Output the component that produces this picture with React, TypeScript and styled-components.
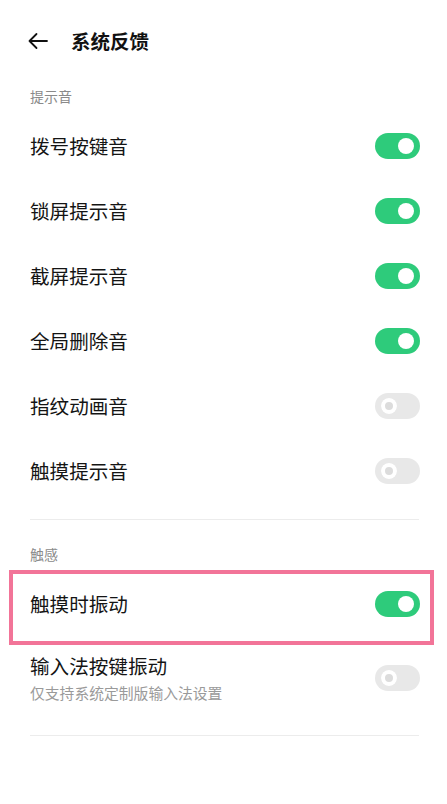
import React from "react";
import styled, { createGlobalStyle } from "styled-components";

const GlobalStyle = createGlobalStyle`
  html, body { margin: 0; padding: 0; background: #ffffff; }
  body {
    font-family: "Noto Sans CJK SC", "Noto Sans", sans-serif;
    color: #141414;
    -webkit-font-smoothing: antialiased;
  }
  * { box-sizing: border-box; }
`;

const Page = styled.div`
  width: 447px;
  min-height: 804px;
  background: #fff;
  padding: 0 28px 0 30px;
  display: flex;
  flex-direction: column;
`;

const Header = styled.header`
  height: 81px;
  display: flex;
  align-items: center;
  gap: 22px;
  margin-left: -3px;
`;

const BackButton = styled.button`
  width: 22px;
  height: 22px;
  padding: 0;
  border: none;
  background: none;
  display: flex;
  align-items: center;
  justify-content: center;
  color: #111;
`;

const Title = styled.h1`
  margin: 0;
  font-size: 19.5px;
  font-weight: 700;
  line-height: 26px;
  color: #111;
`;

const SectionLabel = styled.div<{ $top: number }>`
  padding-top: ${(p) => p.$top}px;
  padding-bottom: 7px;
  font-size: 14px;
  line-height: 20px;
  color: #8a8a8a;
`;

const Row = styled.div<{ $highlight?: boolean; $tall?: boolean }>`
  position: relative;
  display: flex;
  align-items: center;
  justify-content: space-between;
  min-height: 65px;
  padding: ${(p) => (p.$tall ? "17px 0" : "0")};
  ${(p) =>
    p.$highlight &&
    `
    &::after {
      content: "";
      position: absolute;
      left: -21px;
      right: -15px;
      top: -1px;
      bottom: -9px;
      border: 4px solid #f27498;
      pointer-events: none;
    }
  `}
`;

const TextBlock = styled.div`
  display: flex;
  flex-direction: column;
`;

const RowTitle = styled.div`
  font-size: 19.6px;
  line-height: 26px;
  color: #141414;
`;

const RowSub = styled.div`
  font-size: 14.8px;
  line-height: 20px;
  color: #9a9a9a;
  margin-top: 4px;
`;

const Toggle = styled.div<{ $on: boolean }>`
  position: relative;
  width: 45px;
  height: 26px;
  border-radius: 13px;
  background: ${(p) => (p.$on ? "#2ecb7b" : "#e8e8e8")};
  flex-shrink: 0;
  margin-right: -1px;
`;

const Knob = styled.div<{ $on: boolean }>`
  position: absolute;
  top: 5px;
  width: 16px;
  height: 16px;
  border-radius: 50%;
  ${(p) => (p.$on ? "right: 6px;" : "left: 6px;")}
  background: ${(p) => (p.$on ? "#fff" : "#dcdcdc")};
  box-shadow: ${(p) => (p.$on ? "none" : "inset 0 0 0 4px #ffffff")};
`;

const Divider = styled.div<{ $top: number }>`
  height: 1px;
  background: #ececec;
  margin-top: ${(p) => p.$top}px;
`;

const Switch = ({ on }: { on: boolean }) => (
  <Toggle $on={on}>
    <Knob $on={on} />
  </Toggle>
);

const soundItems: { label: string; on: boolean }[] = [
  { label: "拨号按键音", on: true },
  { label: "锁屏提示音", on: true },
  { label: "截屏提示音", on: true },
  { label: "全局删除音", on: true },
  { label: "指纹动画音", on: false },
  { label: "触摸提示音", on: false },
];

export default function App() {
  return (
    <>
      <GlobalStyle />
      <Page>
        <Header>
          <BackButton aria-label="返回">
            <svg width="22" height="22" viewBox="0 0 22 22" fill="none">
              <path
                d="M20 11H2.5M9.5 4L2.5 11L9.5 18"
                stroke="#111"
                strokeWidth="1.8"
                strokeLinecap="round"
                strokeLinejoin="round"
              />
            </svg>
          </BackButton>
          <Title>系统反馈</Title>
        </Header>

        <SectionLabel $top={5}>提示音</SectionLabel>
        {soundItems.map((it) => (
          <Row key={it.label}>
            <RowTitle>{it.label}</RowTitle>
            <Switch on={it.on} />
          </Row>
        ))}

        <Divider $top={16} />

        <SectionLabel $top={24}>触感</SectionLabel>
        <Row $highlight>
          <RowTitle>触摸时振动</RowTitle>
          <Switch on />
        </Row>
        <Row $tall>
          <TextBlock>
            <RowTitle>输入法按键振动</RowTitle>
            <RowSub>仅支持系统定制版输入法设置</RowSub>
          </TextBlock>
          <Switch on={false} />
        </Row>
        <Divider $top={15} />
      </Page>
    </>
  );
}
